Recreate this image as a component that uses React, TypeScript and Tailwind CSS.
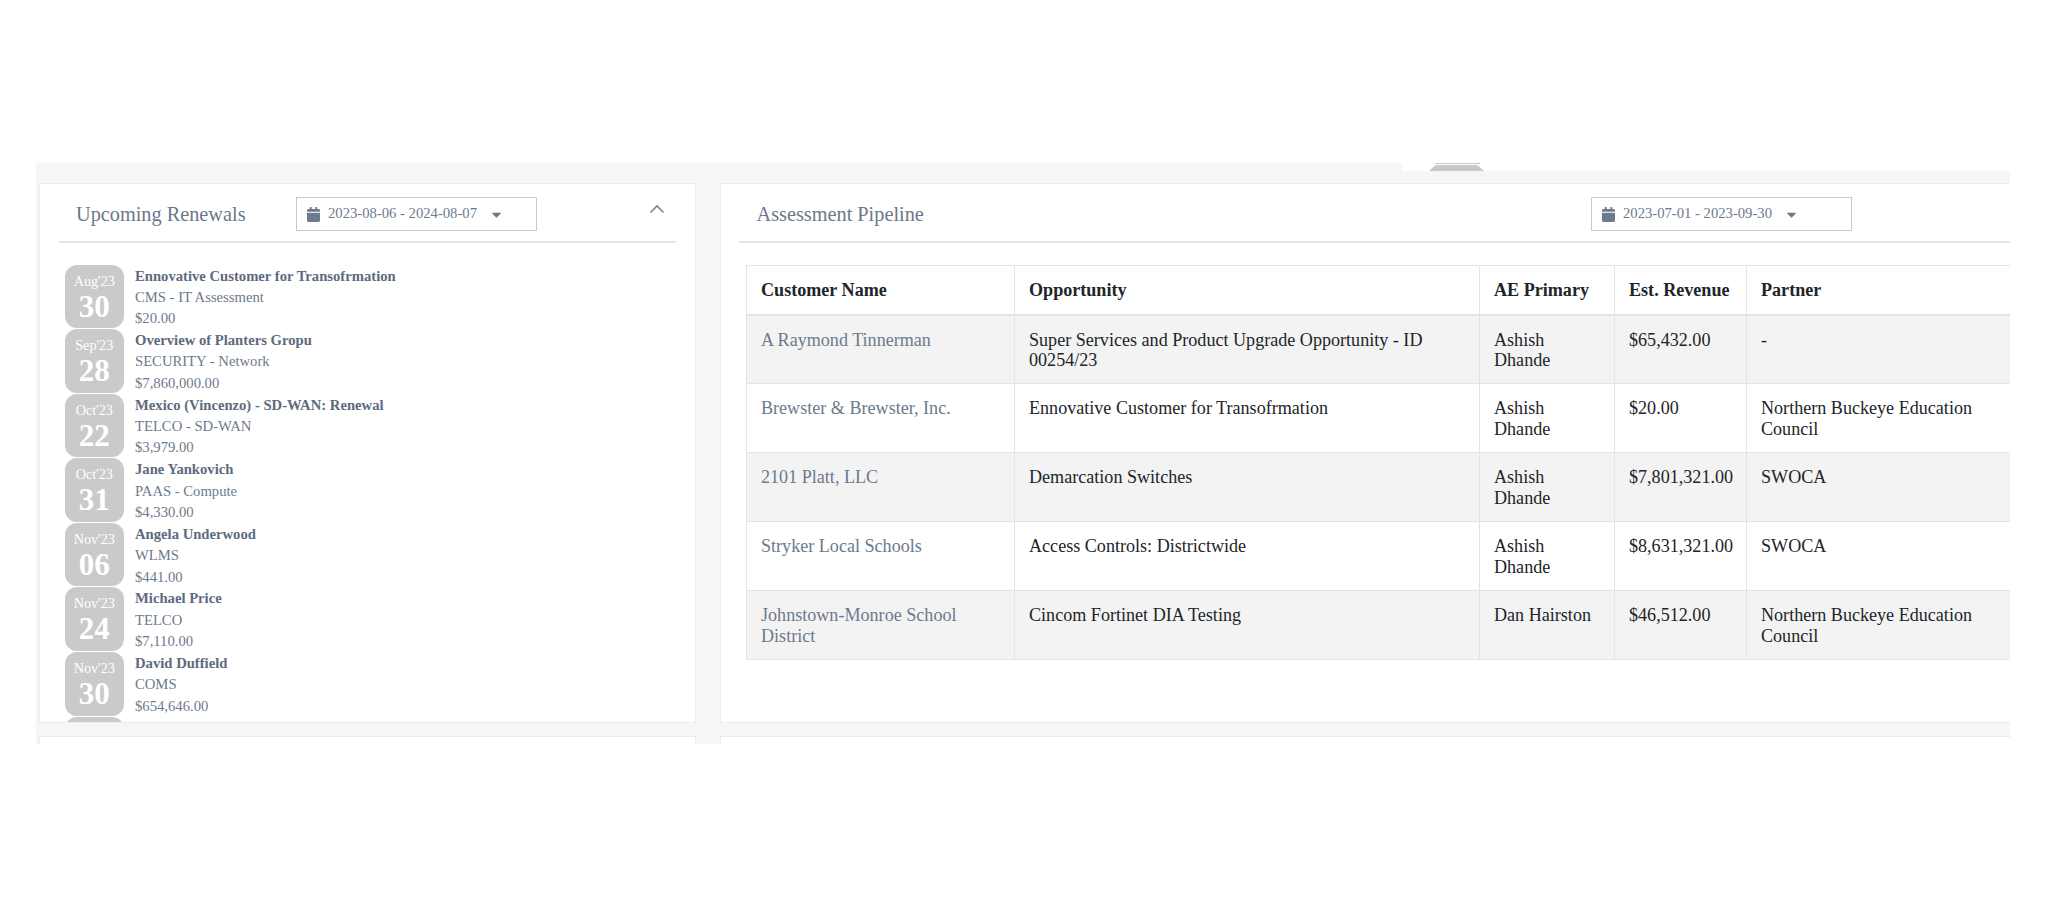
import { FaCalendar, FaCaretDown } from "react-icons/fa";

const serif = "font-['Liberation_Serif','Times_New_Roman',serif]";

const renewals = [
  { month: "Aug'23", day: "30", name: "Ennovative Customer for Transofrmation", type: "CMS - IT Assessment", amount: "$20.00" },
  { month: "Sep'23", day: "28", name: "Overview of Planters Gropu", type: "SECURITY - Network", amount: "$7,860,000.00" },
  { month: "Oct'23", day: "22", name: "Mexico (Vincenzo) - SD-WAN: Renewal", type: "TELCO - SD-WAN", amount: "$3,979.00" },
  { month: "Oct'23", day: "31", name: "Jane Yankovich", type: "PAAS - Compute", amount: "$4,330.00" },
  { month: "Nov'23", day: "06", name: "Angela Underwood", type: "WLMS", amount: "$441.00" },
  { month: "Nov'23", day: "24", name: "Michael Price", type: "TELCO", amount: "$7,110.00" },
  { month: "Nov'23", day: "30", name: "David Duffield", type: "COMS", amount: "$654,646.00" },
];

const pipeline = [
  { customer: "A Raymond Tinnerman", opportunity: "Super Services and Product Upgrade Opportunity - ID 00254/23", ae: "Ashish Dhande", revenue: "$65,432.00", partner: "-" },
  { customer: "Brewster & Brewster, Inc.", opportunity: "Ennovative Customer for Transofrmation", ae: "Ashish Dhande", revenue: "$20.00", partner: "Northern Buckeye Education Council" },
  { customer: "2101 Platt, LLC", opportunity: "Demarcation Switches", ae: "Ashish Dhande", revenue: "$7,801,321.00", partner: "SWOCA" },
  { customer: "Stryker Local Schools", opportunity: "Access Controls: Districtwide", ae: "Ashish Dhande", revenue: "$8,631,321.00", partner: "SWOCA" },
  { customer: "Johnstown-Monroe School District", opportunity: "Cincom Fortinet DIA Testing", ae: "Dan Hairston", revenue: "$46,512.00", partner: "Northern Buckeye Education Council" },
];

function DateRange({ label, className }: { label: string; className: string }) {
  return (
    <div className={`flex h-[34px] items-center border border-[#c6c9d0] bg-white text-[14.66px] text-[#6c7a8d] ${className}`}>
      <FaCalendar className="ml-[10px] h-[15px] w-[13px] shrink-0" />
      <span className="ml-[8px]">{label}</span>
      <FaCaretDown className="ml-[14px] h-[15px] w-[11px] shrink-0" />
    </div>
  );
}

function Renewal({ month, day, name, type, amount }: (typeof renewals)[number]) {
  return (
    <div className="flex h-[64.6px] pl-[25px]">
      <div className="-mt-[1px] flex h-[63.5px] w-[58.5px] shrink-0 flex-col items-center rounded-[12px] bg-[#cacaca] pt-[7px] text-white">
        <span className="text-[14.2px] leading-[19px]">{month}</span>
        <span className="text-[31px] leading-[31px] font-bold">{day}</span>
      </div>
      <div className="ml-[11.5px] text-[14.66px] leading-[21.33px] text-[#6c7a8d]">
        <div className="font-bold text-[#5d6a7e]">{name}</div>
        <div>{type}</div>
        <div>{amount}</div>
      </div>
    </div>
  );
}

const th = "border border-[#e2e4e9] border-b-2 px-[14px] text-left font-bold";
const td = "border border-[#e2e4e9] px-[14px] pt-[14px] pb-[13.4px] align-top";

export default function App() {
  return (
    <div className={`h-[907px] bg-white pt-[163px] pl-[36px] ${serif}`}>
      <div className="h-[581px] w-[1974px] overflow-hidden bg-[#f6f6f6]">
        <div className="flex h-[8px]">
          <div className="flex-1" />
          <div className="w-[608px] bg-white pl-[27px]">
            <svg viewBox="0 0 55 8" className="block h-[8px] w-[55px] text-[#c8c8c8]" fill="currentColor">
              <rect x="6" y="0" width="45" height="1" />
              <path d="M0 8 5 3.5C6 2.5 7 2 9 2h37c2 0 3 .5 4 1.5L55 8z" />
            </svg>
          </div>
        </div>
        <div className="mt-[12px] flex gap-[24px] pl-[3px]">
          <div className="h-[540px] w-[657px] shrink-0 overflow-hidden border border-[#ebebeb] bg-white">
            <div className="mx-[19px] flex h-[59px] items-start border-b-2 border-[#e6e7eb] pt-[13px] pl-[17px]">
              <h2 className="w-[220px] text-[20.3px] leading-[34px] text-[#6c7889]">Upcoming Renewals</h2>
              <DateRange label="2023-08-06 - 2024-08-07" className="w-[241px]" />
              <svg viewBox="0 0 16 10" className="mt-[7px] mr-[11px] ml-auto h-[10px] w-[16px] text-[#7a8494]" fill="none" stroke="currentColor" strokeWidth="1.6">
                <path d="M1.5 8.5 8 2l6.5 6.5" />
              </svg>
            </div>
            <div className="pt-[22.5px]">
              {renewals.map((r) => (
                <Renewal key={r.month + r.day} {...r} />
              ))}
              <div className="-mt-[1px] ml-[25px] h-[63.5px] w-[58.5px] rounded-[12px] bg-[#cacaca]" />
            </div>
          </div>
          <div className="h-[540px] w-[1400px] shrink-0 overflow-hidden border border-[#ebebeb] bg-white">
            <div className="ml-[18px] flex h-[59px] items-start border-b-2 border-[#e6e7eb] pt-[13px] pl-[17.5px]">
              <h2 className="w-[834.5px] text-[20.3px] leading-[34px] text-[#6c7889]">Assessment Pipeline</h2>
              <DateRange label="2023-07-01 - 2023-09-30" className="w-[261px]" />
            </div>
            <table className="mt-[22px] ml-[25px] w-[1300px] table-fixed border-collapse text-[18.1px] leading-[20.3px] text-[#212529]">
              <colgroup>
                <col className="w-[268px]" />
                <col className="w-[465px]" />
                <col className="w-[135px]" />
                <col className="w-[132px]" />
                <col className="w-[300px]" />
              </colgroup>
              <thead>
                <tr className="h-[49px]">
                  <th className={th}>Customer Name</th>
                  <th className={th}>Opportunity</th>
                  <th className={th}>AE Primary</th>
                  <th className={th}>Est. Revenue</th>
                  <th className={th}>Partner</th>
                </tr>
              </thead>
              <tbody>
                {pipeline.map((row, i) => (
                  <tr key={row.customer} className={i % 2 === 0 ? "bg-[#f3f3f3]" : "bg-white"}>
                    <td className={`${td} text-[#6c7a8d]`}>{row.customer}</td>
                    <td className={td}>{row.opportunity}</td>
                    <td className={td}>{row.ae}</td>
                    <td className={td}>{row.revenue}</td>
                    <td className={td}>{row.partner}</td>
                  </tr>
                ))}
              </tbody>
            </table>
          </div>
        </div>
        <div className="mt-[13px] flex gap-[24px] pl-[3px]">
          <div className="h-[40px] w-[657px] shrink-0 border border-[#ebebeb] bg-white" />
          <div className="h-[40px] w-[1400px] shrink-0 border border-[#ebebeb] bg-white" />
        </div>
      </div>
    </div>
  );
}
